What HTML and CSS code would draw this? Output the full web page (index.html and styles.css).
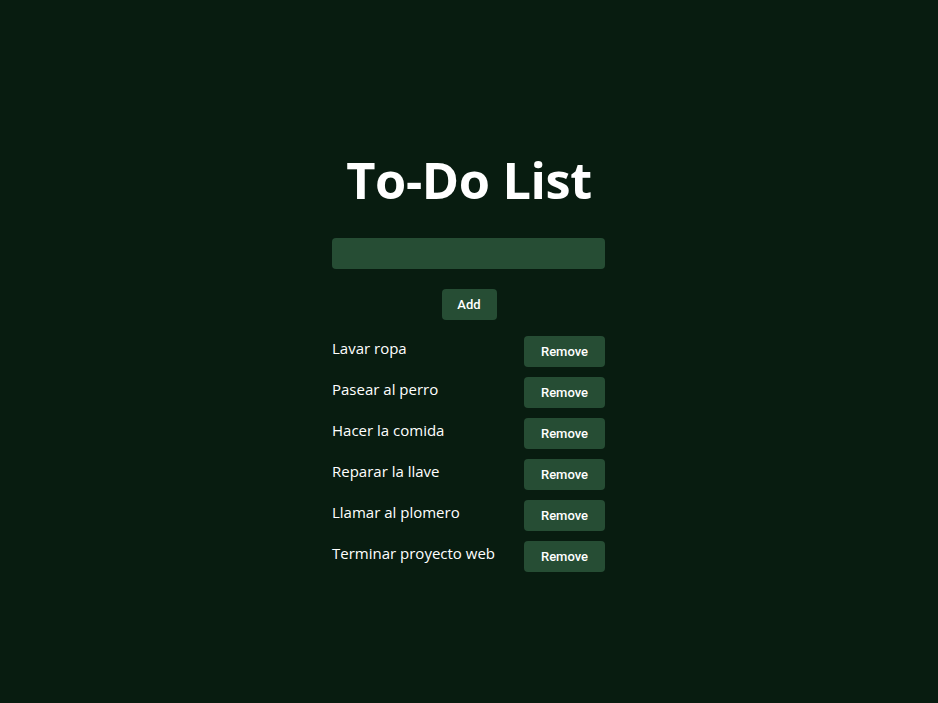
FILE: index.html
```html
<!DOCTYPE html>
<html lang="es">
<head>
<meta charset="utf-8">
<title>To-Do List</title>
<link rel="stylesheet" href="styles.css">
</head>
<body>
<main class="app">
  <h1 class="title">To-Do List</h1>
  <input class="task-input" type="text" aria-label="Nueva tarea">
  <button class="btn btn-add">Add</button>
  <ul class="list">
    <li class="item"><span class="item-text">Lavar ropa</span><button class="btn btn-remove">Remove</button></li>
    <li class="item"><span class="item-text">Pasear al perro</span><button class="btn btn-remove">Remove</button></li>
    <li class="item"><span class="item-text">Hacer la comida</span><button class="btn btn-remove">Remove</button></li>
    <li class="item"><span class="item-text">Reparar la llave</span><button class="btn btn-remove">Remove</button></li>
    <li class="item"><span class="item-text">Llamar al plomero</span><button class="btn btn-remove">Remove</button></li>
    <li class="item"><span class="item-text">Terminar proyecto web</span><button class="btn btn-remove">Remove</button></li>
  </ul>
</main>
</body>
</html>
```

FILE: styles.css
```css
html, body {
  margin: 0;
  padding: 0;
}
body {
  background: #081c10;
  color: #ffffff;
  font-family: "Open Sans", "Noto Sans", sans-serif;
  min-height: 100vh;
}
.app {
  width: 274px;
  margin: 0 auto;
  padding-top: 141px;
  display: flex;
  flex-direction: column;
  align-items: center;
}
.title {
  margin: 0;
  font-size: 50.5px;
  font-weight: 700;
  line-height: 77px;
  letter-spacing: -0.4px;
}
.task-input {
  box-sizing: border-box;
  align-self: flex-start;
  width: 273px;
  height: 31px;
  margin-top: 20px;
  border: none;
  border-radius: 4px;
  background: #264d34;
  color: #fff;
  padding: 0 8px;
  outline: none;
}
.btn {
  border: none;
  border-radius: 4px;
  background: #264d34;
  color: #fff;
  font-family: Roboto, "Liberation Sans", sans-serif;
  font-weight: 500;
  font-size: 13px;
  height: 31px;
  cursor: pointer;
}
.btn-add {
  width: 55px;
  margin-top: 20px;
}
.list {
  list-style: none;
  margin: 16px 0 0;
  padding: 0;
  width: 273px;
  align-self: flex-start;
  display: flex;
  flex-direction: column;
  gap: 10px;
}
.item {
  display: flex;
  justify-content: space-between;
  align-items: flex-start;
}
.item-text {
  font-size: 15px;
  line-height: 24px;
}
.btn-remove {
  width: 81px;
}
```
